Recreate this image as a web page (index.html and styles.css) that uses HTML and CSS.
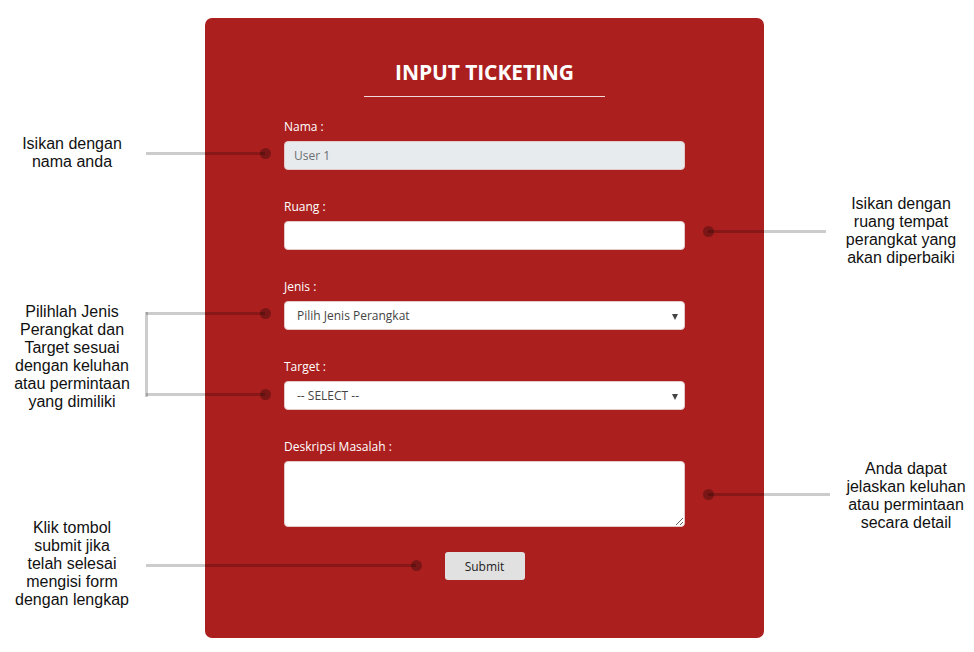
FILE: index.html
```html
<!DOCTYPE html>
<html>
<head>
<meta charset="utf-8">
<link rel="stylesheet" href="styles.css">
</head>
<body>
<div class="canvas">
  <form class="card">
    <h1 class="title">INPUT TICKETING</h1>
    <div class="rule"></div>
    <div class="group">
      <label class="label">Nama :</label>
      <div class="field field-disabled">User 1</div>
    </div>
    <div class="group">
      <label class="label">Ruang :</label>
      <div class="field"></div>
    </div>
    <div class="group">
      <label class="label">Jenis :</label>
      <div class="field select">Pilih Jenis Perangkat</div>
    </div>
    <div class="group">
      <label class="label">Target :</label>
      <div class="field select">-- SELECT --</div>
    </div>
    <div class="group">
      <label class="label">Deskripsi Masalah :</label>
      <textarea class="textarea"></textarea>
    </div>
    <div class="actions">
      <button type="button" class="btn">Submit</button>
    </div>
  </form>

  <div class="note note-left n1">Isikan dengan<br>nama anda</div>
  <div class="note note-left n2">Pilihlah Jenis<br>Perangkat dan<br>Target sesuai<br>dengan keluhan<br>atau permintaan<br>yang dimiliki</div>
  <div class="note note-left n3">Klik tombol<br>submit jika<br>telah selesai<br>mengisi form<br>dengan lengkap</div>
  <div class="note r1">Isikan dengan<br>ruang tempat<br>perangkat yang<br>akan diperbaiki</div>
  <div class="note r2">Anda dapat<br>jelaskan keluhan<br>atau permintaan<br>secara detail</div>

  <div class="line h l1"></div><div class="dot d1"></div>
  <div class="line h l2"></div><div class="dot d2"></div>
  <div class="line h l3"></div><div class="dot d3"></div>
  <div class="line v l4"></div>
  <div class="line h l5"></div><div class="dot d5"></div>
  <div class="line h l6"></div><div class="dot d6"></div>
  <div class="line h l7"></div><div class="dot d7"></div>
</div>
</body>
</html>
```
FILE: styles.css
```css
* { box-sizing: border-box; }
html, body { margin: 0; padding: 0; background: #fff; }
.canvas { position: relative; width: 974px; height: 652px; overflow: hidden; padding-top: 18px; }

.card {
  margin: 0 0 0 205px;
  width: 559px;
  height: 620px;
  background: #ab1f1f;
  border-radius: 7px;
  padding: 39px 79px 0 79px;
  display: flex;
  flex-direction: column;
  font-family: "Open Sans", "Noto Sans", sans-serif;
}
.title {
  margin: 0;
  text-align: center;
  color: #fff;
  font-size: 21px;
  font-weight: 700;
  line-height: 30px;
  letter-spacing: -0.1px;
}
.rule {
  width: 241px;
  height: 1px;
  background: #f1d9d9;
  margin: 9px auto 21px;
}
.group { display: flex; flex-direction: column; margin-bottom: 28px; }
.label {
  color: #fff;
  font-size: 12px;
  line-height: 18px;
  margin-bottom: 5px;
}
.field {
  height: 29px;
  background: #fff;
  border: 1px solid #e3c9c9;
  border-radius: 4px;
  font-size: 12px;
  line-height: 27px;
  padding: 0 12px;
  color: #444;
  position: relative;
}
.field-disabled { background: #e8ebee; color: #6b6f74; padding-left: 9px; }
.select::after {
  content: "";
  position: absolute;
  right: 6px;
  top: 12px;
  border-left: 3px solid transparent;
  border-right: 3px solid transparent;
  border-top: 6px solid #444;
}
.textarea {
  display: block;
  height: 66px;
  width: 100%;
  border: 1px solid #e3c9c9;
  border-radius: 4px;
  background: #fff;
  resize: vertical;
  margin: 0;
}
.actions { display: flex; justify-content: center; margin-top: -3px; }
.btn {
  width: 80px;
  height: 28px;
  background: #e1e1e1;
  border: none;
  border-radius: 3px;
  font-family: "Open Sans", "Noto Sans", sans-serif;
  font-size: 12px;
  color: #222;
  padding: 0;
}

.note {
  position: absolute;
  font-family: "Liberation Sans", Arial, sans-serif;
  font-size: 16px;
  line-height: 18px;
  color: #111;
  text-align: center;
  width: 170px;
}
.note-left { left: -13px; }
.n1 { top: 135px; }
.n2 { top: 303px; }
.n3 { top: 519px; }
.r1 { left: 816px; top: 195px; }
.r2 { left: 821px; top: 460px; }

.line { position: absolute; background: rgba(0,0,0,0.2); }
.h { height: 3px; }
.v { width: 3px; }
.dot {
  position: absolute;
  width: 11px; height: 11px;
  border-radius: 50%;
  background: rgba(0,0,0,0.28);
}
.l1 { left: 146px; width: 119px; top: 152px; }
.d1 { left: 260px; top: 148px; }
.l2 { left: 708px; width: 118px; top: 230px; }
.d2 { left: 703px; top: 226px; }
.l3 { left: 146px; width: 119px; top: 312px; }
.d3 { left: 260px; top: 308px; }
.l4 { left: 145px; top: 312px; height: 85px; }
.l5 { left: 146px; width: 119px; top: 393px; }
.d5 { left: 260px; top: 389px; }
.l6 { left: 708px; width: 122px; top: 493px; }
.d6 { left: 703px; top: 489px; }
.l7 { left: 146px; width: 270px; top: 564px; }
.d7 { left: 411px; top: 560px; }
```
